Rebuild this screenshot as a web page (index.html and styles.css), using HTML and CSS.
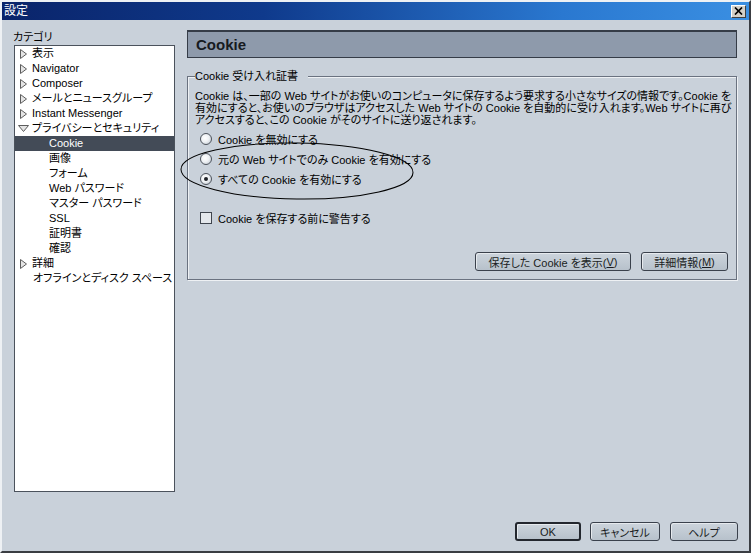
FILE: index.html
```html
<!DOCTYPE html>
<html lang="ja">
<head>
<meta charset="utf-8">
<title>設定</title>
<link rel="stylesheet" href="styles.css">
</head>
<body>
<div class="window">
  <div class="titlebar">
    <span class="title">設定</span>
    <span class="close"><svg width="9" height="8" viewBox="0 0 9 8"><path d="M1 0.5 L8 7.5 M8 0.5 L1 7.5" stroke="#000" stroke-width="1.7" fill="none"/></svg></span>
  </div>
  <div class="main">
    <div class="left">
      <div class="cat-label">カテゴリ</div>
      <div class="tree">
        <div class="row top"><svg class="tw" width="7" height="10" viewBox="0 0 7 10"><path d="M0.5 0.5 L6.5 5 L0.5 9.5 Z" fill="#e4e4e4" stroke="#5c5c5c"/></svg>表示</div>
        <div class="row top"><svg class="tw" width="7" height="10" viewBox="0 0 7 10"><path d="M0.5 0.5 L6.5 5 L0.5 9.5 Z" fill="#e4e4e4" stroke="#5c5c5c"/></svg>Navigator</div>
        <div class="row top"><svg class="tw" width="7" height="10" viewBox="0 0 7 10"><path d="M0.5 0.5 L6.5 5 L0.5 9.5 Z" fill="#e4e4e4" stroke="#5c5c5c"/></svg>Composer</div>
        <div class="row top"><svg class="tw" width="7" height="10" viewBox="0 0 7 10"><path d="M0.5 0.5 L6.5 5 L0.5 9.5 Z" fill="#e4e4e4" stroke="#5c5c5c"/></svg>メールとニュースグループ</div>
        <div class="row top"><svg class="tw" width="7" height="10" viewBox="0 0 7 10"><path d="M0.5 0.5 L6.5 5 L0.5 9.5 Z" fill="#e4e4e4" stroke="#5c5c5c"/></svg>Instant Messenger</div>
        <div class="row open"><svg class="tw-open" width="11" height="7" viewBox="0 0 11 7"><path d="M0.5 0.5 L10.5 0.5 L5.5 6.5 Z" fill="#e4e4e4" stroke="#5c5c5c"/></svg>プライバシーとセキュリティ</div>
        <div class="row child selected">Cookie</div>
        <div class="row child">画像</div>
        <div class="row child">フォーム</div>
        <div class="row child">Web パスワード</div>
        <div class="row child">マスター パスワード</div>
        <div class="row child">SSL</div>
        <div class="row child">証明書</div>
        <div class="row child">確認</div>
        <div class="row top"><svg class="tw" width="7" height="10" viewBox="0 0 7 10"><path d="M0.5 0.5 L6.5 5 L0.5 9.5 Z" fill="#e4e4e4" stroke="#5c5c5c"/></svg>詳細</div>
        <div class="row leaf">オフラインとディスク スペース</div>
      </div>
    </div>
    <div class="right">
      <div class="header">Cookie</div>
      <fieldset class="group">
        <legend>Cookie 受け入れ証書</legend>
        <p class="desc">Cookie は、一部の Web サイトがお使いのコンピュータに保存するよう要求する小さなサイズの情報です。Cookie を<br>有効にすると、お使いのブラウザはアクセスした Web サイトの Cookie を自動的に受け入れます。Web サイトに再び<br>アクセスすると、この Cookie がそのサイトに送り返されます。</p>
        <div class="options">
          <div class="opt"><span class="radio"></span>Cookie を無効にする</div>
          <div class="opt"><span class="radio"></span>元の Web サイトでのみ Cookie を有効にする</div>
          <div class="opt"><span class="radio checked"></span>すべての Cookie を有効にする</div>
        </div>
        <div class="opt check-row"><span class="checkbox"></span>Cookie を保存する前に警告する</div>
        <div class="grp-buttons">
          <span class="btn btn-view">保存した Cookie を表示(<u>V</u>)</span>
          <span class="btn btn-info">詳細情報(<u>M</u>)</span>
        </div>
      </fieldset>
      <svg class="circle-mark" width="240" height="64" viewBox="0 0 240 64"><ellipse cx="119" cy="31" rx="116" ry="28" transform="rotate(0.8 119 31)" fill="none" stroke="#000" stroke-width="1"/></svg>
    </div>
  </div>
  <div class="footer">
    <span class="btn btn-ok">OK</span>
    <span class="btn btn-cancel">キャンセル</span>
    <span class="btn btn-help">ヘルプ</span>
  </div>
</div>
</body>
</html>
```

FILE: styles.css
```css
* { box-sizing: border-box; }
html, body { margin: 0; padding: 0; }
body {
  width: 751px;
  height: 553px;
  overflow: hidden;
  background: #c9d1da;
  font: 11px "Liberation Sans", "Noto Sans CJK JP", sans-serif;
  font-feature-settings: "palt";
  color: #000;
}
.window {
  width: 751px;
  height: 553px;
  border: 2px solid;
  border-color: #eef1f4 #3a3d42 #3a3d42 #eef1f4;
  background: #c9d1da;
  display: flex;
  flex-direction: column;
}
.titlebar {
  height: 18px;
  background: linear-gradient(to right, #0a246a 0%, #0f3a8c 35%, #2a78d0 75%, #3a8fe2 100%);
  display: flex;
  align-items: center;
  justify-content: space-between;
  padding: 0 3px 0 2px;
  color: #fff;
  font-size: 12px;
}
.title { line-height: 18px; }
.close {
  width: 15px;
  height: 13px;
  background: #d4d0c8;
  border: 1px solid;
  border-color: #ffffff #404040 #404040 #ffffff;
  display: flex;
  align-items: center;
  justify-content: center;
}
.main {
  display: flex;
  gap: 12px;
  padding: 10px 12px 0 12px;
}
.left { width: 161px; flex: none; }
.cat-label {
  height: 15px;
  line-height: 14px;
  margin-left: -1px;
}
.tree {
  height: 447px;
  background: #fff;
  border: 1px solid #4b525c;
}
.row {
  height: 15px;
  line-height: 15px;
  display: flex;
  align-items: center;
  white-space: nowrap;
}
.row.top { padding-left: 5px; }
.row.top .tw { margin-right: 5px; flex: none; }
.row.open { padding-left: 3px; }
.row.open .tw-open { margin-right: 3px; flex: none; }
.row.child { padding-left: 34px; }
.row.leaf { padding-left: 18px; }
.row.selected { background: #434b57; color: #fff; }

.right { width: 550px; flex: none; position: relative; }
.header {
  height: 28px;
  background: #8e9aab;
  border: 1px solid #353c47;
  border-top-width: 2px;
  font: bold 15px "Liberation Sans", sans-serif;
  color: #161a20;
  padding-left: 8px;
  display: flex;
  align-items: center;
}
.group {
  margin: 12px 0 0;
  padding: 0 8px 8px 7px;
  border: 1px solid #6a7280;
  box-shadow: inset 1px 1px 0 #eef1f4, 1px 1px 0 #eef1f4;
  min-width: 0;
}
.group legend {
  padding: 0 10px 0 0;
  line-height: 12px;
  background: #c9d1da;
}
.desc {
  margin: 8px 0 0;
  line-height: 12px;
  white-space: nowrap;
}
.options { margin-top: 3px; }
.opt {
  height: 20px;
  display: flex;
  align-items: center;
  white-space: nowrap;
}
.radio {
  width: 12px;
  height: 12px;
  border-radius: 50%;
  border: 1px solid #4d535c;
  background: radial-gradient(circle at 40% 40%, #ffffff 0%, #eef1f4 45%, #b6bfc9 100%);
  margin: 0 6px 0 5px;
  flex: none;
  position: relative;
}
.radio.checked::after {
  content: "";
  position: absolute;
  left: 3px;
  top: 3px;
  width: 4px;
  height: 4px;
  border-radius: 50%;
  background: #1e2228;
}
.check-row { margin-top: 19px; }
.checkbox {
  width: 12px;
  height: 12px;
  border: 1px solid #3f454e;
  background: #e4e8ec;
  margin: 0 6px 0 5px;
  flex: none;
}
.grp-buttons {
  margin-top: 24px;
  display: flex;
  justify-content: flex-end;
  gap: 10px;
}
.btn {
  height: 19px;
  display: inline-flex;
  align-items: center;
  justify-content: center;
  border: 1px solid #3a414c;
  border-radius: 3px;
  background: linear-gradient(#ccd4dc, #b7c1cb);
  box-shadow: inset 1px 1px 0 #e6eaee;
  white-space: nowrap;
  color: #1a1d22;
}
.btn u { text-decoration: underline; text-underline-offset: 1px; }
.btn-view { width: 156px; }
.btn-info { width: 87px; }
.circle-mark {
  position: absolute;
  left: -9px;
  top: 110px;
  pointer-events: none;
}
.footer {
  display: flex;
  justify-content: flex-end;
  gap: 9px;
  padding: 30px 11px 0 0;
}
.btn-ok { width: 66px; border-width: 2px; border-color: #23272e; }
.btn-cancel { width: 70px; margin-right: 1px; }
.btn-help { width: 68px; }
```
